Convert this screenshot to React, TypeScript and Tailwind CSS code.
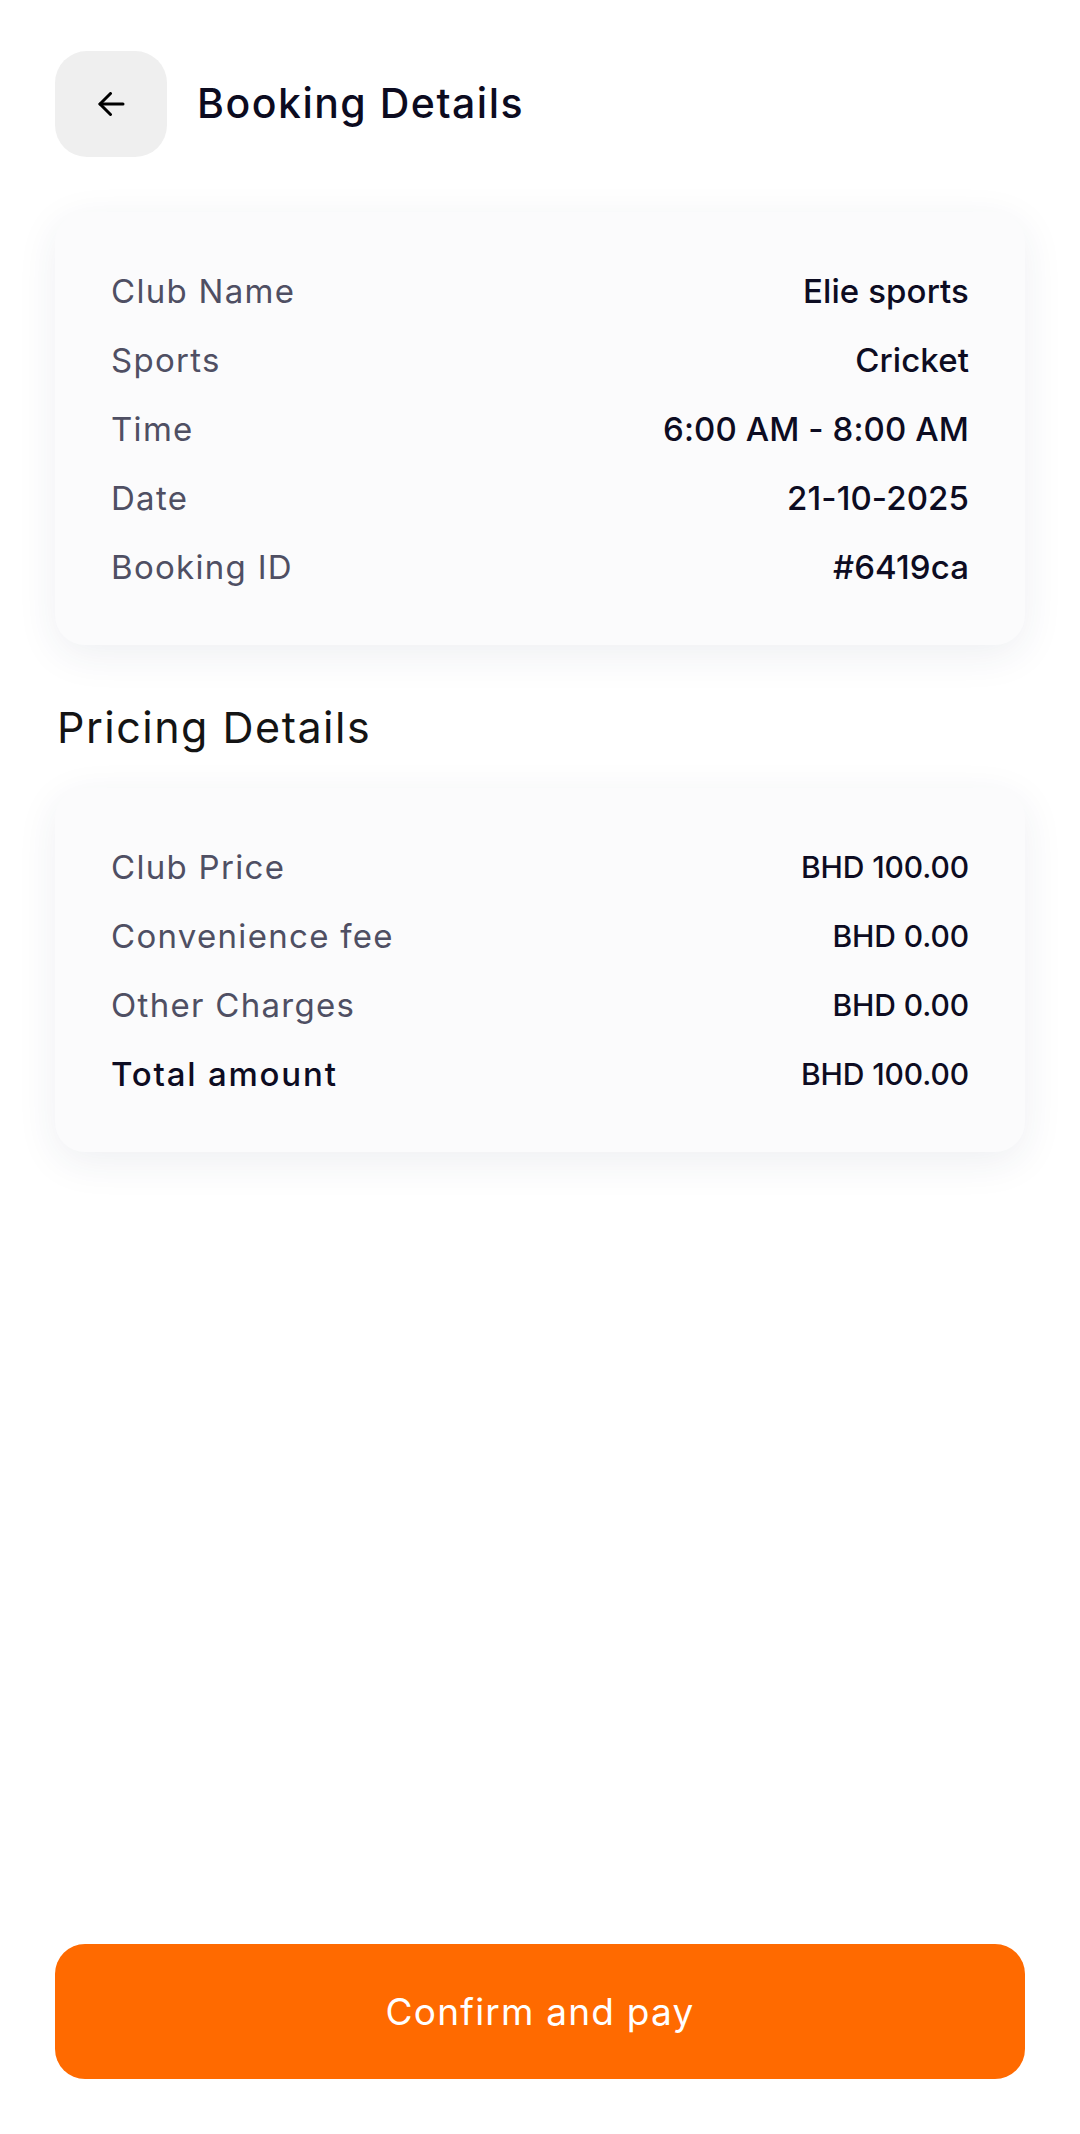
import React from "react";

const sans = "font-['Inter',_'Noto_Sans',_sans-serif]";

function Row({ label, value, strong = false, small = false }: { label: string; value: string; strong?: boolean; small?: boolean }) {
  return (
    <div className="flex h-[69px] items-center justify-between">
      <span
        className={
          strong
            ? "text-[33px] font-medium tracking-[1.8px] text-[#0d0c22]"
            : "text-[33px] font-normal tracking-[1.3px] text-[#4f4f63]"
        }
      >
        {label}
      </span>
      <span
        className={
          small
            ? "text-[30px] font-medium tracking-[-0.1px] text-[#0d0c22]"
            : "text-[33px] font-medium tracking-[0.1px] text-[#0d0c22]"
        }
      >
        {value}
      </span>
    </div>
  );
}

function Card({ children }: { children: React.ReactNode }) {
  return (
    <div className="rounded-[30px] bg-[#fbfbfc] px-[56px] pt-[45px] pb-[43px] shadow-[0_10px_40px_rgba(40,50,90,0.08)]">
      {children}
    </div>
  );
}

export default function App() {
  return (
    <div className={`${sans} flex min-h-[2134px] w-full flex-col bg-white px-[55px] leading-normal`}>
      <div className="flex items-center pt-[51px]">
        <button className="flex h-[106px] w-[112px] items-center justify-center rounded-[32px] bg-[#efefef]">
          <svg width="28" height="24" viewBox="0 0 28 24" fill="none">
            <path d="M26 12H3" stroke="#000" strokeWidth="3" strokeLinecap="round" />
            <path d="M13.5 1.5L3 12l10.5 10.5" stroke="#000" strokeWidth="3" strokeLinecap="round" strokeLinejoin="round" />
          </svg>
        </button>
        <h1 className="ml-[30px] text-[41px] font-medium tracking-[1.5px] text-[#0c0b1f]">Booking Details</h1>
      </div>

      <div className="mt-[55px]">
        <Card>
          <Row label="Club Name" value="Elie sports" />
          <Row label="Sports" value="Cricket" />
          <Row label="Time" value="6:00 AM - 8:00 AM" />
          <Row label="Date" value="21-10-2025" />
          <Row label="Booking ID" value="#6419ca" />
        </Card>
      </div>

      <h2 className="mt-[52px] ml-[2px] text-[43px] font-normal leading-[60px] tracking-[1.5px] text-[#141414]">
        Pricing Details
      </h2>

      <div className="mt-[31px]">
        <Card>
          <Row label="Club Price" value="BHD 100.00" small />
          <Row label="Convenience fee" value="BHD 0.00" small />
          <Row label="Other Charges" value="BHD 0.00" small />
          <Row label="Total amount" value="BHD 100.00" strong small />
        </Card>
      </div>

      <div className="flex-1" />

      <button className="mb-[55px] flex h-[135px] w-full items-center justify-center rounded-[30px] bg-[#ff6a00] text-[37px] font-normal tracking-[1.2px] text-white">
        Confirm and pay
      </button>
    </div>
  );
}
